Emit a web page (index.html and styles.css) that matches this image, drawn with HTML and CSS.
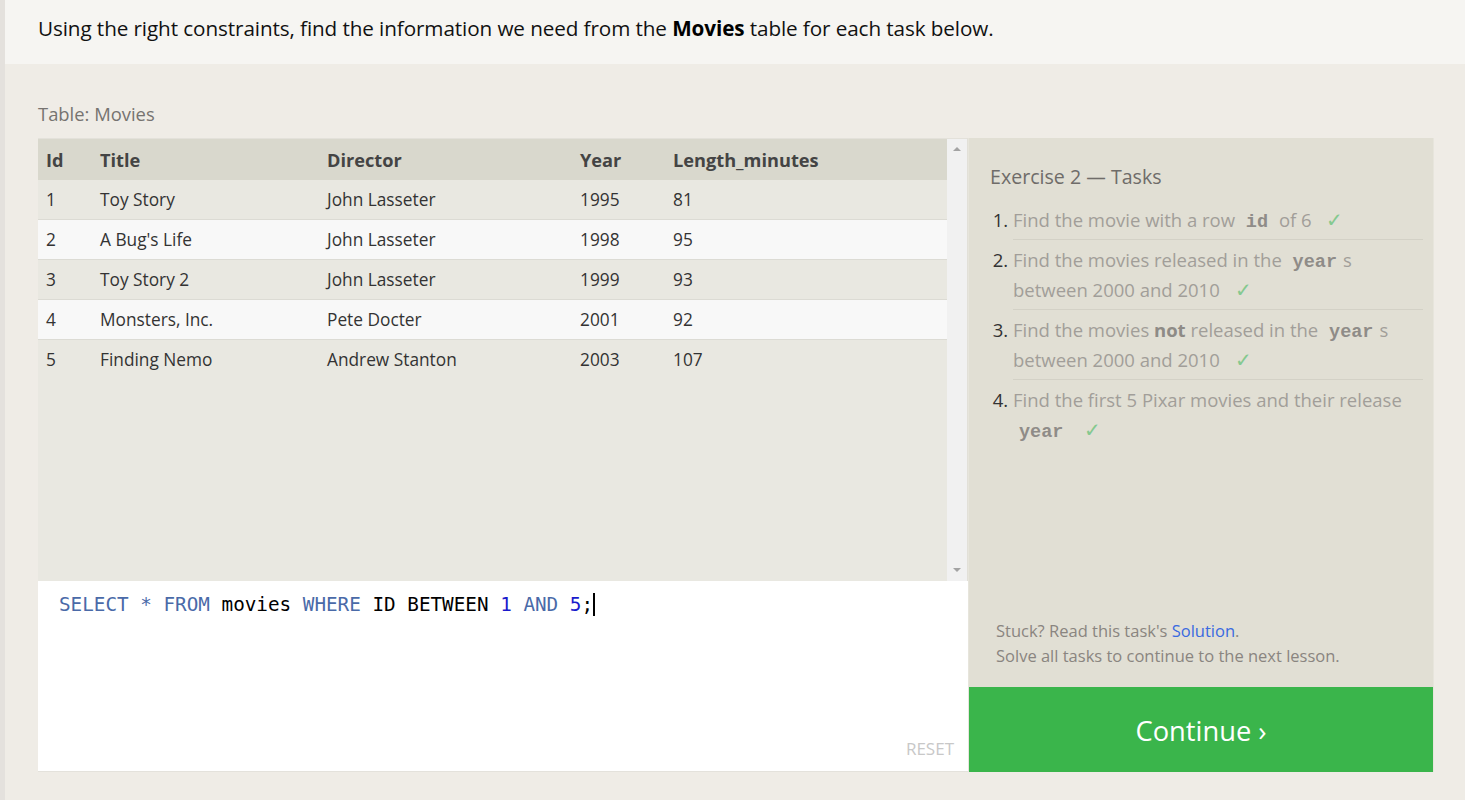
FILE: index.html
```html
<!DOCTYPE html>
<html>
<head>
<meta charset="utf-8">
<link rel="stylesheet" href="styles.css">
</head>
<body>
<div class="page">
  <header class="intro">
    <p>Using the right constraints, find the information we need from the <b>Movies</b> table for each task below.</p>
  </header>
  <main class="lesson">
    <div class="table-label">Table: Movies</div>
    <div class="workspace">
      <div class="left-col">
        <div class="table-box">
          <div class="table-scroll">
            <table class="data">
              <thead>
                <tr><th class="c-id">Id</th><th class="c-title">Title</th><th class="c-dir">Director</th><th class="c-year">Year</th><th>Length_minutes</th></tr>
              </thead>
              <tbody>
                <tr><td>1</td><td>Toy Story</td><td>John Lasseter</td><td>1995</td><td>81</td></tr>
                <tr><td>2</td><td>A Bug's Life</td><td>John Lasseter</td><td>1998</td><td>95</td></tr>
                <tr><td>3</td><td>Toy Story 2</td><td>John Lasseter</td><td>1999</td><td>93</td></tr>
                <tr><td>4</td><td>Monsters, Inc.</td><td>Pete Docter</td><td>2001</td><td>92</td></tr>
                <tr><td>5</td><td>Finding Nemo</td><td>Andrew Stanton</td><td>2003</td><td>107</td></tr>
              </tbody>
            </table>
          </div>
          <div class="scrollbar">
            <span class="arrow up"></span>
            <span class="arrow down"></span>
          </div>
        </div>
        <div class="editor">
          <div class="code"><span class="kw">SELECT</span> <span class="kw">*</span> <span class="kw">FROM</span> movies <span class="kw">WHERE</span> ID BETWEEN <span class="num">1</span> <span class="kw">AND</span> <span class="num">5</span>;<span class="cursor"></span></div>
          <div class="reset">RESET</div>
        </div>
      </div>
      <aside class="right-col">
        <div class="tasks">
          <h2 class="tasks-title">Exercise 2 — Tasks</h2>
          <ol class="task-list">
            <li><span class="t">Find the movie with a row <code>id</code> of 6 <span class="check">✓</span></span></li>
            <li><span class="t">Find the movies released in the <code>year</code>s between 2000 and 2010 <span class="check">✓</span></span></li>
            <li><span class="t">Find the movies <b>not</b> released in the <code>year</code>s between 2000 and 2010 <span class="check">✓</span></span></li>
            <li class="last"><span class="t">Find the first 5 Pixar movies and their release <code>year</code> <span class="check">✓</span></span></li>
          </ol>
          <div class="help">
            <p>Stuck? Read this task's <a href="#">Solution</a>.</p>
            <p>Solve all tasks to continue to the next lesson.</p>
          </div>
        </div>
        <div class="continue">Continue ›</div>
      </aside>
    </div>
  </main>
</div>
</body>
</html>
```

FILE: styles.css
```css
html, body {
  margin: 0;
  padding: 0;
}
body {
  background: #efece6;
  font-family: "Open Sans", "Noto Sans", sans-serif;
  color: #222;
  height: 800px;
  overflow: hidden;
}
.page {
  border-left: 5px solid #e4e1dd;
  min-height: 800px;
  box-sizing: border-box;
}
.intro {
  background: #f6f5f2;
  height: 64px;
  box-sizing: border-box;
  padding: 13px 0 0 33px;
}
.intro p {
  margin: 0;
  font-size: 20.7px;
  line-height: 30px;
  color: #111;
  letter-spacing: -0.1px;
}
.intro b {
  font-weight: 700;
  color: #000;
}
.lesson {
  padding: 37px 30px 0 33px;
}
.table-label {
  font-size: 18.4px;
  color: #767370;
  line-height: 26px;
  margin-bottom: 11px;
}
.workspace {
  display: flex;
  align-items: stretch;
}
.left-col {
  width: 930px;
  flex: none;
  display: flex;
  flex-direction: column;
}
.table-box {
  height: 443px;
  display: flex;
  background: #e9e8e1;
  border-top: 1px solid #e3e1da;
  box-sizing: border-box;
  border-right: 1px solid #e2e0d8;
}
.table-scroll {
  flex: 1;
  overflow: hidden;
}
.data {
  width: 100%;
  border-collapse: collapse;
  font-size: 17.3px;
}
.data th {
  background: #d9d8cd;
  color: #444;
  font-weight: 700;
  text-align: left;
  height: 41px;
  padding: 0 8px;
  font-size: 18.2px;
}
.data td {
  height: 39px;
  padding: 0 8px;
  color: #333;
  border-bottom: 1px solid #dcdbd4;
}
.data tbody tr:nth-child(odd) td { background: #e9e8e1; }
.data tbody tr:nth-child(even) td { background: #f8f8f8; }
.data tbody tr:last-child td { border-bottom-color: transparent; }
.c-id { width: 38px; }
.c-title { width: 211px; }
.c-dir { width: 237px; }
.c-year { width: 77px; }
.scrollbar {
  width: 20px;
  background: #f1f1f1;
  position: relative;
}
.arrow {
  position: absolute;
  left: 6px;
  width: 0;
  height: 0;
  border-left: 4px solid transparent;
  border-right: 4px solid transparent;
}
.arrow.up {
  top: 8px;
  border-bottom: 4px solid #a3a3a3;
}
.arrow.down {
  bottom: 9px;
  border-top: 4px solid #a3a3a3;
}
.editor {
  height: 191px;
  background: #fff;
  box-sizing: border-box;
  border-bottom: 1px solid #e4e2dc;
  padding: 12px 14px 0 21px;
  display: flex;
  flex-direction: column;
  justify-content: space-between;
}
.code {
  font-family: "DejaVu Sans Mono", "Liberation Mono", monospace;
  font-size: 19.3px;
  line-height: 24px;
  color: #000;
  white-space: pre;
}
.kw { color: #4a6aa8; }
.num { color: #1a1acc; }
.cursor {
  display: inline-block;
  width: 2px;
  height: 23px;
  background: #000;
  vertical-align: -5px;
}
.reset {
  align-self: flex-end;
  font-size: 17px;
  color: #c8c8c8;
  line-height: 22px;
  margin-bottom: 11px;
}
.right-col {
  width: 466px;
  flex: none;
  box-sizing: border-box;
  display: flex;
  flex-direction: column;
  border-left: 1px solid #e7e5dc;
  border-right: 1px solid #e7e5dc;
}
.tasks {
  flex: 1;
  background: #e1dfd4;
  padding: 25px 10px 0 21px;
  display: flex;
  flex-direction: column;
}
.tasks-title {
  margin: 0 0 14px;
  font-weight: 400;
  font-size: 19.6px;
  color: #6f6c69;
  line-height: 28px;
}
.task-list {
  margin: 0;
  padding: 0 0 0 23px;
  font-size: 18.5px;
  line-height: 30px;
  color: #333;
}
.task-list li {
  border-bottom: 1px solid #d3d1c6;
  padding: 0 0 4px;
  margin-bottom: 5px;
}
.task-list li.last {
  border-bottom: none;
}
.task-list .t {
  color: #a19e99;
}
.task-list b {
  color: #8e8b86;
  font-weight: 700;
}
.task-list code {
  font-family: "Liberation Mono", "DejaVu Sans Mono", monospace;
  font-weight: 700;
  color: #8f8c88;
  font-size: 18.5px;
  line-height: 10px;
  padding: 0 6px;
}
.check {
  color: #85c98f;
  margin-left: 10px;
  font-size: 20px;
  line-height: 10px;
}
.help {
  margin-top: auto;
  padding: 0 0 19px 6px;
  font-size: 16.5px;
  line-height: 25px;
  color: #8a8580;
}
.help p { margin: 0; }
.help a {
  color: #3a6ae0;
  text-decoration: none;
}
.continue {
  height: 85px;
  background: #3ab54b;
  color: #fff;
  font-size: 27.3px;
  display: flex;
  align-items: center;
  justify-content: center;
  padding-top: 2px;
  box-sizing: border-box;
}
```
